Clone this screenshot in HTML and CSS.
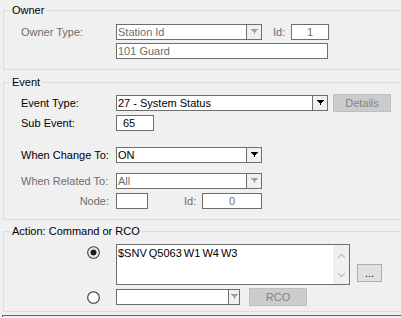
FILE: index.html
```html
<html>
<head>
<meta charset="utf-8">
<link rel="stylesheet" href="styles.css">
</head>
<body>

<div class="group owner-group">
  <div class="legend">Owner</div>
  <div class="row">
    <span class="label off">Owner Type:</span>
    <div class="combo w146 disabled">
      <span class="combo-text">Station Id</span>
      <span class="combo-btn"><svg width="7" height="6" viewBox="0 0 7 6" shape-rendering="crispEdges"><polygon points="0,0 7,0 4,4 4,5 3,5 3,4" /></svg></span>
    </div>
    <span class="small-label off id-owner">Id:</span>
    <div class="box w38 center disabled">1</div>
  </div>
  <div class="row gap3">
    <div class="box w212 disabled">101 Guard</div>
  </div>
</div>

<div class="group event-group">
  <div class="legend">Event</div>
  <div class="row row18 mt5">
    <span class="label">Event Type:</span>
    <div class="combo w212">
      <span class="combo-text">27 - System Status</span>
      <span class="combo-btn"><svg width="7" height="6" viewBox="0 0 7 6" shape-rendering="crispEdges"><polygon points="0,0 7,0 4,4 4,5 3,5 3,4" /></svg></span>
    </div>
    <button class="btn btn-off details">Details</button>
  </div>
  <div class="row gap3">
    <span class="label">Sub Event:</span>
    <div class="box w38 pad6">65</div>
  </div>
  <div class="row mt16">
    <span class="label">When Change To:</span>
    <div class="combo w146">
      <span class="combo-text">ON</span>
      <span class="combo-btn"><svg width="7" height="6" viewBox="0 0 7 6" shape-rendering="crispEdges"><polygon points="0,0 7,0 4,4 4,5 3,5 3,4" /></svg></span>
    </div>
  </div>
  <div class="row mt10">
    <span class="label off">When Related To:</span>
    <div class="combo w146 disabled">
      <span class="combo-text">All</span>
      <span class="combo-btn"><svg width="7" height="6" viewBox="0 0 7 6" shape-rendering="crispEdges"><polygon points="0,0 7,0 4,4 4,5 3,5 3,4" /></svg></span>
    </div>
  </div>
  <div class="row mt4">
    <span class="label off right">Node:</span>
    <div class="box w32"></div>
    <span class="small-label off id-node">Id:</span>
    <div class="box w60 center disabled">0</div>
  </div>
</div>

<div class="group action-group">
  <div class="legend">Action: Command or RCO</div>
  <div class="row row-cmd">
    <span class="radio-col top">
      <svg width="13" height="13" viewBox="0 0 13 13"><circle cx="6.5" cy="6.5" r="5.8" fill="#fff" stroke="#333" stroke-width="1.1"/><circle cx="6.5" cy="6.5" r="4.6" fill="none" stroke="#c8c8c8" stroke-width="0.8"/><circle cx="6.5" cy="6.5" r="3" fill="#1a1a1a"/></svg>
    </span>
    <div class="memo">
      <div class="memo-text">$SNV Q5063 W1 W4 W3</div>
      <div class="scroll">
        <svg width="9" height="6" viewBox="0 0 9 6"><polyline points="1,5 4.5,1.5 8,5" fill="none" stroke="#c2c2c2" stroke-width="1.3"/></svg>
        <svg width="9" height="6" viewBox="0 0 9 6"><polyline points="1,1 4.5,4.5 8,1" fill="none" stroke="#c2c2c2" stroke-width="1.3"/></svg>
      </div>
    </div>
    <button class="btn dots">...</button>
  </div>
  <div class="row row18 gap3">
    <span class="radio-col">
      <svg width="13" height="13" viewBox="0 0 13 13"><circle cx="6.5" cy="6.5" r="5.8" fill="#fff" stroke="#333" stroke-width="1.1"/></svg>
    </span>
    <div class="combo w124 disabled">
      <span class="combo-text"></span>
      <span class="combo-btn narrow"><svg width="7" height="6" viewBox="0 0 7 6" shape-rendering="crispEdges"><polygon points="0,0 7,0 4,4 4,5 3,5 3,4" /></svg></span>
    </div>
    <button class="btn btn-off rco">RCO</button>
  </div>
</div>

<div class="next-box"></div>

</body>
</html>
```

FILE: styles.css
```css
html, body {
  margin: 0;
  background: #f0f0f0;
  overflow: hidden;
}
body {
  font-family: "Liberation Sans", Arial, sans-serif;
  font-size: 11px;
  color: #000;
  width: 401px;
  height: 318px;
}

.group {
  border: 1px solid #dcdcdc;
  border-right: none;
  margin-left: 3px;
}
.owner-group {
  margin-top: 10px;
  padding-bottom: 10px;
}
.event-group {
  margin-top: 12px;
  padding-bottom: 10px;
}
.action-group {
  margin-top: 11px;
  padding-bottom: 5px;
}
.legend {
  display: table;
  margin: -7px 0 0 6px;
  padding: 0 2px;
  line-height: 13px;
  background: #f0f0f0;
}

.row {
  display: flex;
  align-items: center;
  height: 16px;
  padding-left: 112px; /* controls start at x 116 */
  margin-top: 7px;
}
.row .label {
  margin-left: -95px;
  width: 95px;
}
.row18 { height: 18px; }
.gap3 { margin-top: 3px; }
.mt4 { margin-top: 4px; }
.mt5 { margin-top: 5px; }
.mt10 { margin-top: 10px; }
.mt16 { margin-top: 16px; }

.label {
  white-space: nowrap;
}
.label.right {
  text-align: right;
  padding-right: 7px;
  box-sizing: border-box;
}
.off { color: #6d6d6d; }

.small-label {
  white-space: nowrap;
}
.id-owner { margin-left: 11px; width: 18px; }
.id-node { margin-left: 36px; width: 18px; }

.box, .combo {
  box-sizing: border-box;
  height: 16px;
  border: 1px solid #6e6e6e;
  background: #fff;
  line-height: 14px;
  white-space: nowrap;
  overflow: hidden;
}
.box { padding-left: 1px; }
.box.center { text-align: center; padding-left: 0; }
.box.pad6 { padding-left: 6px; }
.disabled { color: #6d6d6d; }

.w32 { width: 32px; }
.w38 { width: 38px; }
.w60 { width: 60px; }
.w124 { width: 124px; }
.w146 { width: 146px; }
.w212 { width: 212px; }

.combo {
  display: flex;
}
.combo-text {
  flex: 1;
  padding-left: 1px;
}
.combo-btn {
  width: 14px;
  border-left: 1px solid #6e6e6e;
  background: #f0f0f0;
  display: flex;
  align-items: center;
  justify-content: center;
}
.combo-btn.narrow { width: 10px; }
.combo-btn svg { fill: #000; }
.disabled .combo-btn svg { fill: #a0a0a0; }

.btn {
  box-sizing: border-box;
  height: 18px;
  padding: 0;
  font-family: inherit;
  font-size: 11px;
  border: 1px solid #adadad;
  background: #e1e1e1;
  color: #000;
}
.btn-off {
  border-color: #bfbfbf;
  background: #cccccc;
  color: #838383;
}
.details { width: 58px; margin-left: 5px; }
.rco { width: 58px; margin-left: 9px; }
.dots {
  width: 25px;
  margin-left: 7px;
  align-self: flex-end;
  margin-bottom: 3px;
  line-height: 12px;
}

.radio-col {
  margin-left: -95px;
  width: 95px;
  padding-left: 66px;
  box-sizing: border-box;
  display: flex;
}
.radio-col.top {
  align-self: flex-start;
  margin-top: 2px;
}

.row-cmd {
  height: 41px;
  margin-top: 6px;
}
.memo {
  box-sizing: border-box;
  width: 234px;
  height: 41px;
  border: 1px solid #6e6e6e;
  background: #fff;
  display: flex;
}
.memo-text {
  flex: 1;
  padding: 2px 0 0 1px;
  line-height: 13px;
  word-spacing: -1px;
}
.scroll {
  width: 16px;
  background: #f0f0f0;
  display: flex;
  flex-direction: column;
  justify-content: space-between;
  align-items: center;
  padding: 8px 0 6px;
}

.next-box {
  margin: 3px 0 0 2px;
  height: 1px;
  border: 1px solid #646464;
  border-right: none;
  border-bottom: none;
}
```
